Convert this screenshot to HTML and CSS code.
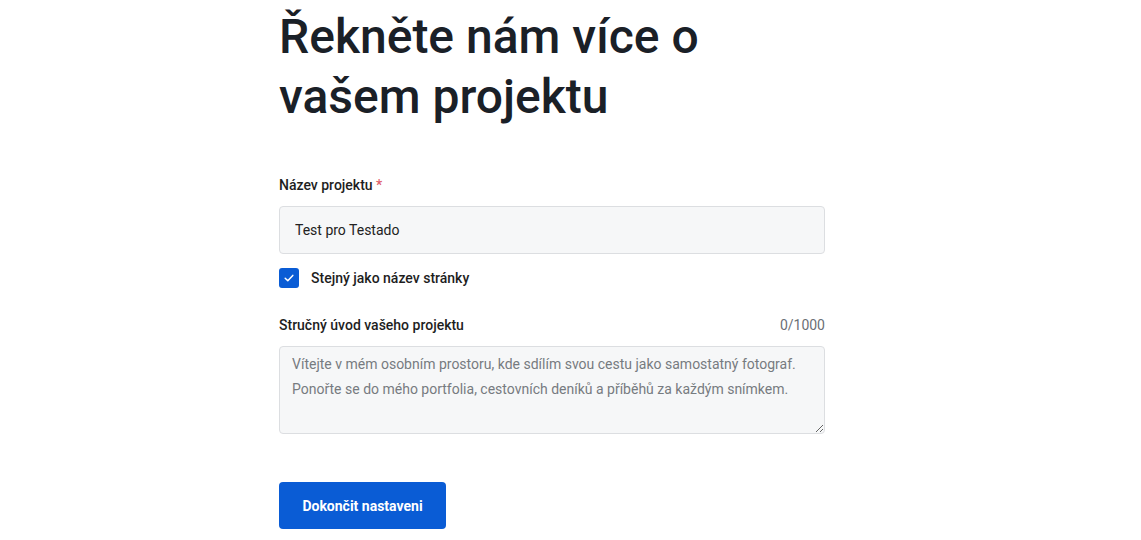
FILE: index.html
```html
<!DOCTYPE html>
<html lang="cs">
<head>
<meta charset="utf-8">
<title>Řekněte nám více o vašem projektu</title>
<link rel="stylesheet" href="styles.css">
</head>
<body>
<main class="page">
  <form class="form">
    <h1 class="title">Řekněte nám více o<br>vašem projektu</h1>

    <div class="field field-name">
      <label class="label" for="name">Název projektu <span class="req">*</span></label>
      <input class="input" id="name" type="text" value="Test pro Testado">
    </div>

    <label class="check">
      <span class="box">
        <svg width="12" height="12" viewBox="0 0 12 12"><path d="M2.2 6.3 L4.8 8.8 L9.8 3.4" fill="none" stroke="#fff" stroke-width="1.5" stroke-linecap="round" stroke-linejoin="round"/></svg>
      </span>
      <span class="check-text">Stejný jako název stránky</span>
    </label>

    <div class="field field-desc">
      <div class="label-row">
        <label class="label" for="desc">Stručný úvod vašeho projektu</label>
        <span class="count">0/1000</span>
      </div>
      <textarea class="textarea" id="desc" placeholder="Vítejte v mém osobním prostoru, kde sdílím svou cestu jako samostatný fotograf. Ponořte se do mého portfolia, cestovních deníků a příběhů za každým snímkem."></textarea>
    </div>

    <button class="btn" type="button">Dokončit nastaveni</button>
  </form>
</main>
</body>
</html>
```

FILE: styles.css
```css
html, body {
  margin: 0;
  padding: 0;
  background: #ffffff;
}
body {
  font-family: Roboto, "Noto Sans", "Liberation Sans", sans-serif;
  color: #1e1e1e;
  overflow: hidden;
}
.page {
  padding-left: 279px;
  padding-top: 7px;
}
.form {
  width: 546px;
  display: flex;
  flex-direction: column;
}
.title {
  margin: 0;
  font-size: 48px;
  line-height: 60px;
  font-weight: 500;
  color: #1a2027;
  letter-spacing: 0;
}
.field {
  display: flex;
  flex-direction: column;
  gap: 11px;
}
.field-name {
  margin-top: 48px;
}
.label {
  font-size: 14px;
  line-height: 20px;
  font-weight: 500;
  color: #1e1e1e;
}
.req {
  color: #e0606a;
}
.input {
  box-sizing: border-box;
  height: 48px;
  margin: 0;
  padding: 0 15px;
  border: 1px solid #dcdee1;
  border-radius: 4px;
  background: #f6f7f8;
  font-family: inherit;
  font-size: 14px;
  color: #222;
  outline: none;
}
.check {
  margin-top: 14px;
  display: flex;
  align-items: center;
  gap: 12px;
  height: 20px;
}
.box {
  width: 20px;
  height: 20px;
  border-radius: 3px;
  background: #0a5cd5;
  display: flex;
  align-items: center;
  justify-content: center;
}
.check-text {
  font-size: 14px;
  font-weight: 500;
  color: #1e1e1e;
}
.field-desc {
  margin-top: 27px;
}
.label-row {
  display: flex;
  justify-content: space-between;
  align-items: center;
}
.count {
  font-size: 14px;
  line-height: 20px;
  color: #6b6f75;
}
.textarea {
  box-sizing: border-box;
  height: 88px;
  margin: 0;
  padding: 5px 12px;
  border: 1px solid #dcdee1;
  border-radius: 4px;
  background: #f6f7f8;
  font-family: inherit;
  font-size: 14px;
  line-height: 25px;
  color: #222;
  outline: none;
}
.textarea::placeholder {
  color: #777b80;
  opacity: 1;
}
.btn {
  margin-top: 48px;
  align-self: flex-start;
  width: 167px;
  height: 47px;
  border: 0;
  border-radius: 4px;
  background: #0a5cd5;
  color: #ffffff;
  font-family: inherit;
  font-size: 14px;
  font-weight: 700;
  cursor: pointer;
}
```
